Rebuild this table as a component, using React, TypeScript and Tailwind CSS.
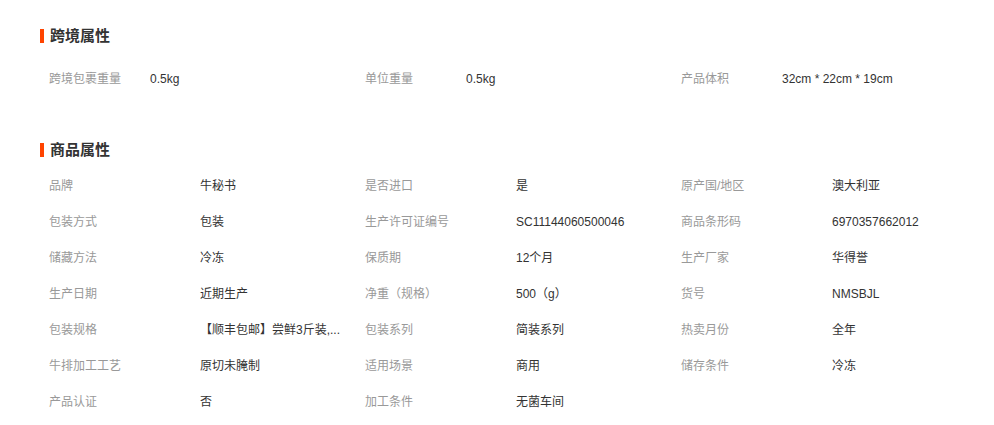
import React from "react";

const font = { fontFamily: '"Liberation Sans", "Noto Sans CJK SC", sans-serif' };

function Heading({ title }: { title: string }) {
  return (
    <div className="flex h-5 items-center pl-10">
      <span className="block h-[14px] w-1 bg-[#ff4400]" />
      <span className="ml-[6px] text-[15px] font-bold leading-5 text-[#333]">{title}</span>
    </div>
  );
}

type Item = [string, string];

function Grid({ items, labelW }: { items: Item[]; labelW: string }) {
  return (
    <div className="grid grid-cols-[316px_316px_316px] pl-[49px]">
      {items.map(([k, v], i) => (
        <div key={i} className="flex h-9 items-center text-xs">
          <span className={`${labelW} shrink-0 text-[#999]`}>{k}</span>
          <span className="whitespace-nowrap text-[#333]">{v}</span>
        </div>
      ))}
    </div>
  );
}

export default function App() {
  const cross: Item[] = [
    ["跨境包裹重量", "0.5kg"],
    ["单位重量", "0.5kg"],
    ["产品体积", "32cm * 22cm * 19cm"],
  ];
  const goods: Item[] = [
    ["品牌", "牛秘书"],
    ["是否进口", "是"],
    ["原产国/地区", "澳大利亚"],
    ["包装方式", "包装"],
    ["生产许可证编号", "SC11144060500046"],
    ["商品条形码", "6970357662012"],
    ["储藏方法", "冷冻"],
    ["保质期", "12个月"],
    ["生产厂家", "华得誉"],
    ["生产日期", "近期生产"],
    ["净重（规格）", "500（g）"],
    ["货号", "NMSBJL"],
    ["包装规格", "【顺丰包邮】尝鲜3斤装,..."],
    ["包装系列", "简装系列"],
    ["热卖月份", "全年"],
    ["牛排加工工艺", "原切未腌制"],
    ["适用场景", "商用"],
    ["储存条件", "冷冻"],
    ["产品认证", "否"],
    ["加工条件", "无菌车间"],
  ];
  return (
    <div className="h-[425px] w-[994px] overflow-hidden bg-white" style={font}>
      <div className="pt-[26px]">
        <Heading title="跨境属性" />
      </div>
      <div className="mt-[15px]">
        <Grid items={cross} labelW="w-[101px]" />
      </div>
      <div className="mt-[43px]">
        <Heading title="商品属性" />
      </div>
      <div className="mt-[8px]">
        <Grid items={goods} labelW="w-[151px]" />
      </div>
    </div>
  );
}
